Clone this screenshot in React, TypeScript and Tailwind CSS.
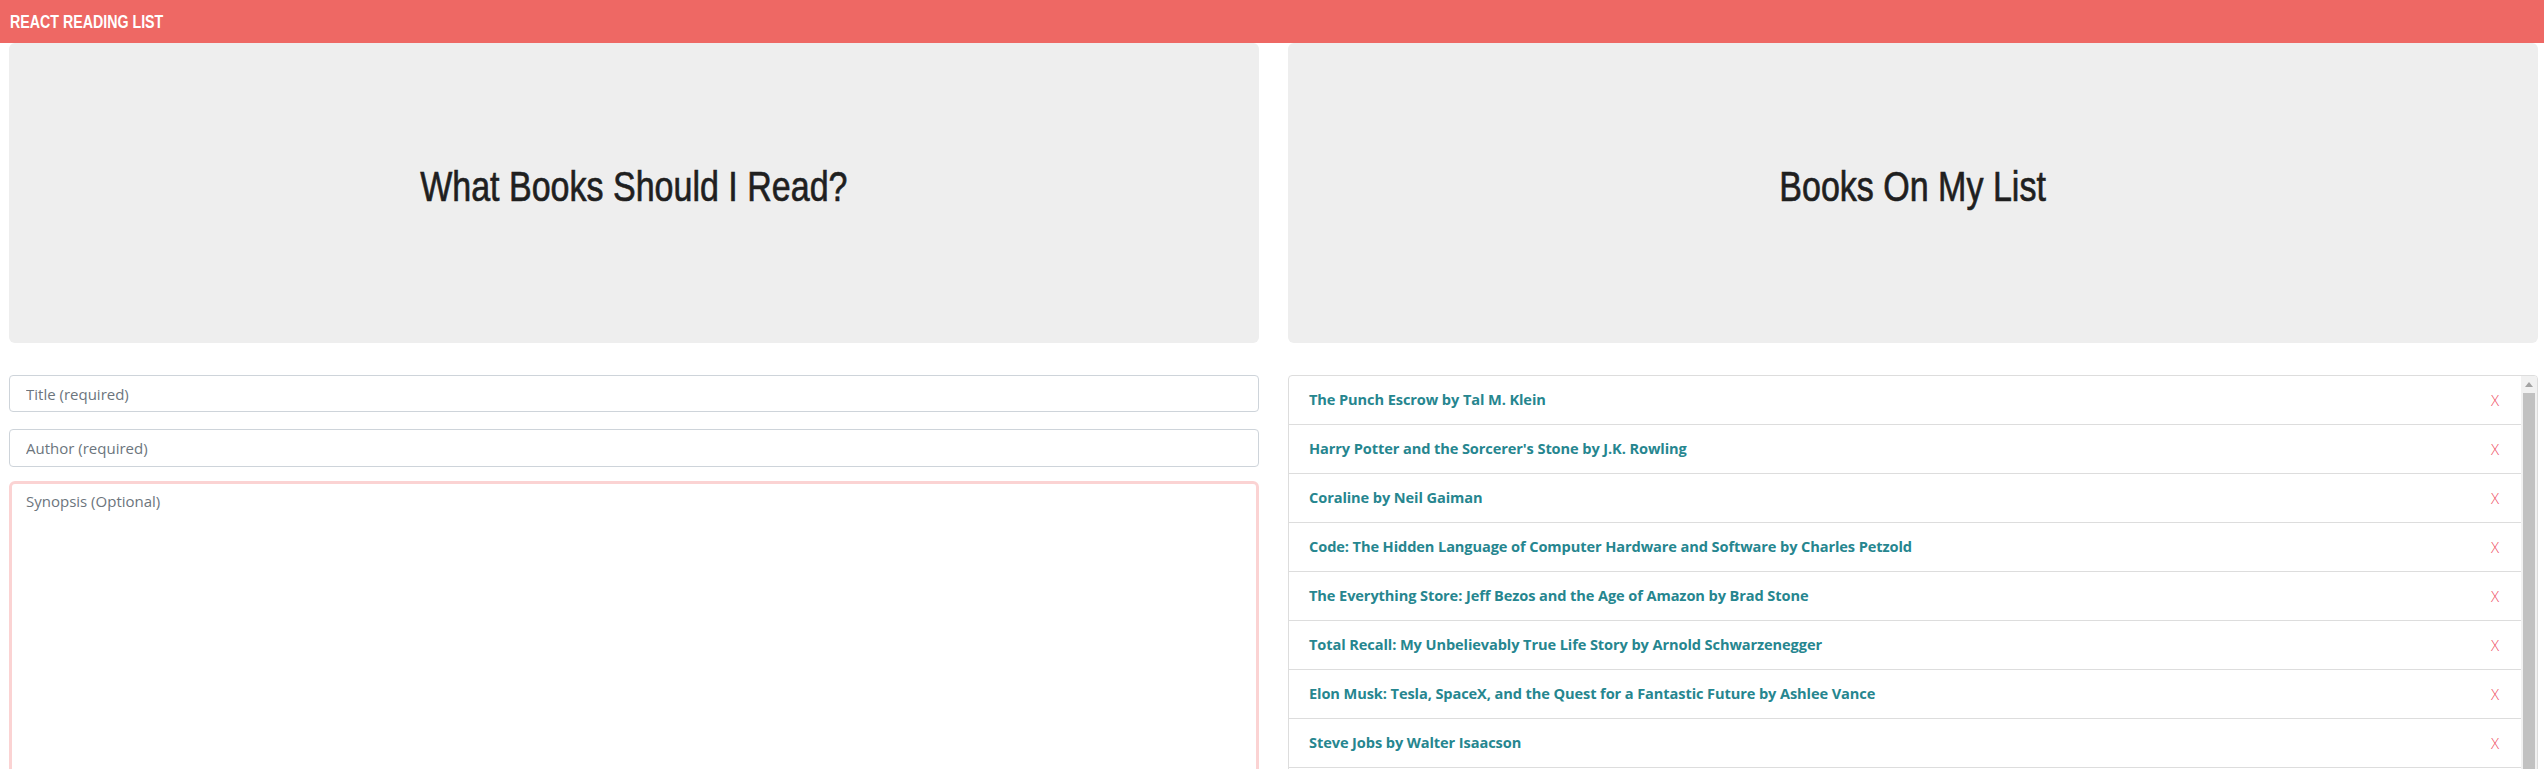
import React from "react";

const books = [
  "The Punch Escrow by Tal M. Klein",
  "Harry Potter and the Sorcerer's Stone by J.K. Rowling",
  "Coraline by Neil Gaiman",
  "Code: The Hidden Language of Computer Hardware and Software by Charles Petzold",
  "The Everything Store: Jeff Bezos and the Age of Amazon by Brad Stone",
  "Total Recall: My Unbelievably True Life Story by Arnold Schwarzenegger",
  "Elon Musk: Tesla, SpaceX, and the Quest for a Fantastic Future by Ashlee Vance",
  "Steve Jobs by Walter Isaacson",
];

const narrow = "font-['Liberation_Sans',Arial,sans-serif]";

export default function App() {
  return (
    <div className="w-full h-[769px] overflow-hidden bg-white font-['Open_Sans',sans-serif]">
      <header className="h-[43px] bg-[#ee6864] flex items-center px-[10px]">
        <span className={`${narrow} inline-block origin-left scale-x-[0.79] text-white font-bold text-[18px] leading-none`}>
          REACT READING LIST
        </span>
      </header>
      <main className="flex gap-[29px] pl-[9px] pr-[6px]">
        <section className="flex-1 flex flex-col">
          <div className="h-[300px] bg-[#eeeeee] rounded-[6px] flex items-center justify-center">
            <h1 className={`${narrow} inline-block scale-x-[0.81] text-[42px] text-[#1f1f1f] leading-none pb-[12px] [-webkit-text-stroke:0.7px_#1f1f1f]`}>
              What Books Should I Read?
            </h1>
          </div>
          <div className="mt-[32px] flex flex-col">
            <input
              className="h-[37px] border border-[#ced4da] rounded-[4px] px-[16px] text-[15px] placeholder:text-[#6c757d] outline-none"
              placeholder="Title (required)"
            />
            <input
              className="mt-[17px] h-[38px] border border-[#ced4da] rounded-[4px] px-[16px] text-[15px] placeholder:text-[#6c757d] outline-none"
              placeholder="Author (required)"
            />
            <textarea
              className="mt-[14px] h-[300px] border-[3px] border-[#fbd3d3] rounded-[6px] px-[14px] pt-[6px] text-[15px] placeholder:text-[#6c757d] outline-none resize-none"
              placeholder="Synopsis (Optional)"
            />
          </div>
        </section>
        <section className="flex-1 flex flex-col">
          <div className="h-[300px] bg-[#eeeeee] rounded-[6px] flex items-center justify-center">
            <h1 className={`${narrow} inline-block scale-x-[0.81] text-[42px] text-[#1f1f1f] leading-none pb-[12px] [-webkit-text-stroke:0.7px_#1f1f1f]`}>
              Books On My List
            </h1>
          </div>
          <div className="mt-[32px] h-[420px] border border-[#dddddd] rounded-t-[4px] flex overflow-hidden">
            <ul className="flex-1 flex flex-col">
              {books.map((b) => (
                <li
                  key={b}
                  className="h-[49px] shrink-0 border-b border-[#dddddd] flex items-center justify-between pl-[20px] pr-[22px]"
                >
                  <span className="text-[14.6px] font-bold text-[#26868f] tracking-[-0.1px]">{b}</span>
                  <span className="text-[15px] text-[#ef4f63] font-light">X</span>
                </li>
              ))}
            </ul>
            <div className="w-[16px] bg-[#f1f1f1] flex flex-col items-center">
              <div className="h-[17px] w-full flex items-center justify-center">
                <svg width="8" height="5" viewBox="0 0 8 5">
                  <path d="M0 5 L4 0 L8 5 Z" fill="#a3a3a3" />
                </svg>
              </div>
              <div className="w-[12px] flex-1 bg-[#c1c1c1]" />
            </div>
          </div>
        </section>
      </main>
    </div>
  );
}
